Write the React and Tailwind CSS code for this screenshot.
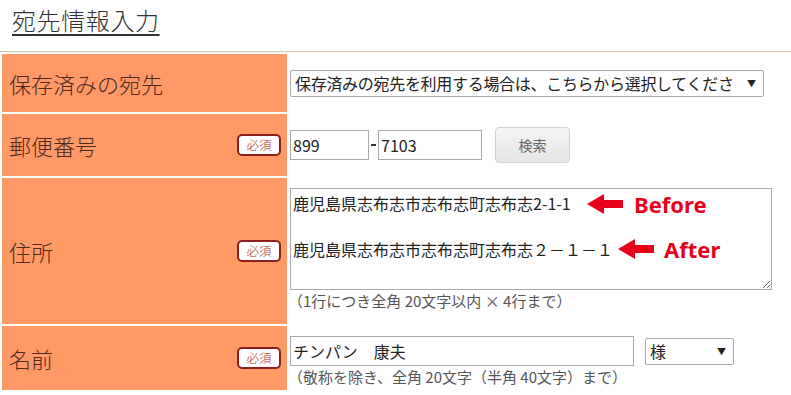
import React from "react";

const FONT = { fontFamily: '"Noto Sans CJK JP", "Noto Sans", sans-serif' };

function Badge() {
  return (
    <span className="flex items-center justify-center w-[44px] h-[22px] bg-white border-2 border-[#8e1f1f] rounded-[5px] text-[12.5px] leading-none text-[#a8322c] font-light">
      必須
    </span>
  );
}

function Arrow() {
  return (
    <svg width="36" height="20" viewBox="0 0 36 20">
      <polygon points="0,10 17,0 17,6 36,6 36,14 17,14 17,20" fill="#e8001a" />
    </svg>
  );
}

function Label({ text, required }) {
  return (
    <div className="w-[285px] shrink-0 bg-[#ff9966] flex items-center justify-between pl-[7px] pr-[6px]">
      <span className="text-[22px] leading-none font-light text-[#4d2a1c]">{text}</span>
      {required && <Badge />}
    </div>
  );
}

export default function App() {
  return (
    <div className="w-[791px] h-[395px] overflow-hidden bg-white text-[#222]" style={FONT}>
      <div className="h-[51px] pl-[12px] pt-[5px]">
        <h1 className="text-[24px] leading-[30px] font-light tracking-[0.6px] text-[#333] underline underline-offset-[4px] decoration-[1.5px]">
          宛先情報入力
        </h1>
      </div>
      <div className="h-px bg-[#d9c8a6]" />
      <div className="pt-[2px] pl-[2px] flex flex-col gap-[2px]">
        {/* Row 1 */}
        <div className="flex h-[58px]">
          <Label text="保存済みの宛先" />
          <div className="flex items-center pl-[3px]">
            <div className="relative w-[474px] h-[27px] border border-[#a9a9a9] rounded-[2px] bg-white flex items-center pl-[4px] overflow-hidden">
              <span className="text-[16px] leading-none tracking-[-0.3px] whitespace-nowrap">
                保存済みの宛先を利用する場合は、こちらから選択してくださ
              </span>
              <span className="absolute right-[7px] top-[6px] text-[9px] text-[#222]">▼</span>
            </div>
          </div>
        </div>

        {/* Row 2 */}
        <div className="flex h-[62px]">
          <Label text="郵便番号" required />
          <div className="flex items-center pl-[3px]">
            <div className="w-[79px] h-[30px] border border-[#a9a9a9] bg-white flex items-center pl-[2px] text-[16px]">899</div>
            <span className="w-[9px] flex justify-center">
              <span className="block w-[5px] h-[2px] bg-[#333]" />
            </span>
            <div className="w-[104px] h-[30px] border border-[#a9a9a9] bg-white flex items-center pl-[2px] text-[16px]">7103</div>
            <div className="ml-[13px] w-[75px] h-[36px] border border-[#d3d3d3] rounded-[4px] bg-gradient-to-b from-[#f4f4f4] to-[#e6e6e6] flex items-center justify-center text-[14px] text-[#666]">
              検索
            </div>
          </div>
        </div>

        {/* Row 3 */}
        <div className="flex h-[146px]">
          <Label text="住所" required />
          <div className="pl-[3px] pt-[10px] flex flex-col">
            <div className="relative">
              <textarea
                readOnly
                value={"鹿児島県志布志市志布志町志布志2-1-1\n\n鹿児島県志布志市志布志町志布志２－１－１"}
                className="block w-[482px] h-[102px] border border-[#a9a9a9] bg-white pl-[2px] pt-[3px] text-[16px] leading-[23px] text-[#222] outline-none"
                style={FONT}
              />
              <div className="absolute left-[297px] top-[5px] flex items-center gap-[11px]">
                <Arrow />
                <span className="text-[22px] font-bold leading-none text-[#e8001a]" style={{ fontFamily: '"Noto Sans", sans-serif' }}>Before</span>
              </div>
              <div className="absolute left-[328px] top-[50px] flex items-center gap-[10px]">
                <Arrow />
                <span className="text-[22px] font-bold leading-none text-[#e8001a]" style={{ fontFamily: '"Noto Sans", sans-serif' }}>After</span>
              </div>
            </div>
            <div className="mt-[2px] text-[15px] leading-[18px] text-[#555] -ml-[2px]">
              （1行につき全角 20文字以内 × 4行まで）
            </div>
          </div>
        </div>

        {/* Row 4 */}
        <div className="flex h-[64px]">
          <Label text="名前" required />
          <div className="pl-[3px] pt-[10px] flex flex-col">
            <div className="flex items-center">
              <div className="w-[344px] h-[30px] border border-[#a9a9a9] bg-white flex items-center pl-[2px] text-[16px]">
                チンパン　康夫
              </div>
              <div className="relative ml-[11px] w-[89px] h-[27px] border border-[#a9a9a9] rounded-[2px] bg-white flex items-center pl-[4px] text-[16px]">
                様
                <span className="absolute right-[7px] top-[6px] text-[9px] text-[#222]">▼</span>
              </div>
            </div>
            <div className="mt-[2px] text-[15px] leading-[18px] text-[#555] -ml-[2px]">
              （敬称を除き、全角 20文字（半角 40文字）まで）
            </div>
          </div>
        </div>
      </div>
    </div>
  );
}
